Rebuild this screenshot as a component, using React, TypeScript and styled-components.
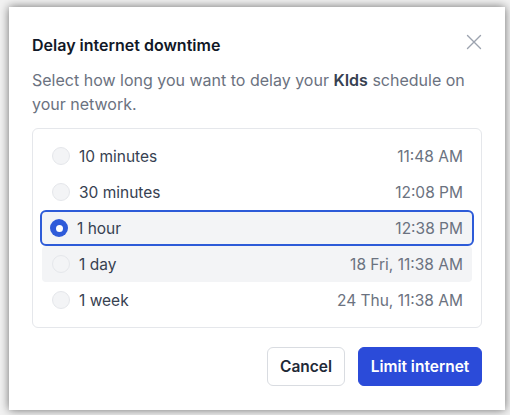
import React, { useState } from "react";
import styled, { createGlobalStyle } from "styled-components";

const Global = createGlobalStyle`
  html, body { margin: 0; padding: 0; }
  body {
    background: #f2f2f2;
    font-family: Inter, "Noto Sans", sans-serif;
    -webkit-font-smoothing: antialiased;
  }
`;

const Page = styled.div`
  width: 510px;
  height: 415px;
  padding: 7px 5px 5px 9px;
  box-sizing: border-box;
`;

const Card = styled.div`
  position: relative;
  width: 496px;
  height: 403px;
  background: #ffffff;
  box-shadow: 0 0 9px rgba(0, 0, 0, 0.55);
  box-sizing: border-box;
  padding: 26px 23px 0 23px;
  display: flex;
  flex-direction: column;
`;

const Header = styled.div`
  display: flex;
  justify-content: space-between;
  align-items: flex-start;
`;

const Title = styled.h2`
  margin: 0;
  font-size: 16px;
  line-height: 24px;
  font-weight: 600;
  color: #111827;
`;

const CloseBtn = styled.button`
  border: none;
  background: none;
  padding: 0;
  margin: 0 -1px 0 0;
  width: 18px;
  height: 18px;
  display: flex;
  align-items: center;
  justify-content: center;
  cursor: pointer;
  color: #9ca3af;
`;

const Desc = styled.p`
  margin: 11px 0 0 0;
  font-size: 16px;
  line-height: 24px;
  color: #6b7280;
  b { font-weight: 600; color: #374151; }
`;

const List = styled.div`
  margin-top: 12px;
  border: 1px solid #e5e7eb;
  border-radius: 6px;
  padding: 9px 8px;
  display: flex;
  flex-direction: column;
`;

const Row = styled.label<{ $selected?: boolean; $hover?: boolean }>`
  display: flex;
  align-items: center;
  height: 36px;
  box-sizing: border-box;
  padding: 0 9px 0 ${(p) => (p.$selected ? "8px" : "10px")};
  border-radius: ${(p) => (p.$selected ? "6px" : "4px")};
  border: ${(p) => (p.$selected ? "2px solid #2d5bd8" : "none")};
  margin: ${(p) => (p.$selected ? "0 -1px" : "0 1px")};
  background: ${(p) => (p.$selected || p.$hover ? "#f3f4f6" : "transparent")};
  cursor: pointer;
`;

const Radio = styled.span<{ $checked?: boolean }>`
  width: 18px;
  height: 18px;
  border-radius: 50%;
  box-sizing: border-box;
  flex-shrink: 0;
  background: ${(p) => (p.$checked ? "#2f5bd9" : "#f3f4f6")};
  border: ${(p) => (p.$checked ? "none" : "1.5px solid #e5e7eb")};
  display: flex;
  align-items: center;
  justify-content: center;
  &::after {
    content: "";
    display: ${(p) => (p.$checked ? "block" : "none")};
    width: 7px;
    height: 7px;
    border-radius: 50%;
    background: #ffffff;
  }
`;

const Label = styled.span`
  margin-left: 9px;
  font-size: 15.5px;
  color: #374151;
  flex: 1;
`;

const Time = styled.span`
  font-size: 15.5px;
  color: #6b7280;
`;

const Footer = styled.div`
  margin-top: 19px;
  display: flex;
  justify-content: flex-end;
  gap: 13px;
`;

const Button = styled.button<{ $primary?: boolean }>`
  height: 39px;
  box-sizing: border-box;
  padding: 0 10px;
  border-radius: 6px;
  font-family: inherit;
  font-size: 15.5px;
  font-weight: 600;
  cursor: pointer;
  border: ${(p) => (p.$primary ? "1px solid #2b4bd9" : "1px solid #d9dce1")};
  background: ${(p) => (p.$primary ? "#2b4bd9" : "#ffffff")};
  color: ${(p) => (p.$primary ? "#ffffff" : "#1f2937")};
  min-width: ${(p) => (p.$primary ? "124px" : "78px")};
`;

const options = [
  { label: "10 minutes", time: "11:48 AM" },
  { label: "30 minutes", time: "12:08 PM" },
  { label: "1 hour", time: "12:38 PM" },
  { label: "1 day", time: "18 Fri, 11:38 AM" },
  { label: "1 week", time: "24 Thu, 11:38 AM" },
];

export default function App() {
  const [selected, setSelected] = useState(2);
  return (
    <>
      <Global />
      <Page>
        <Card>
          <Header>
            <Title>Delay internet downtime</Title>
            <CloseBtn aria-label="Close">
              <svg width="16" height="16" viewBox="0 0 16 16" fill="none">
                <path d="M1.5 1.5L14.5 14.5M14.5 1.5L1.5 14.5" stroke="#9ca3af" strokeWidth="1.4" strokeLinecap="round" />
              </svg>
            </CloseBtn>
          </Header>
          <Desc>
            Select how long you want to delay your <b>KIds</b> schedule on your network.
          </Desc>
          <List>
            {options.map((o, i) => (
              <Row key={o.label} $selected={i === selected} $hover={i === 3} onClick={() => setSelected(i)}>
                <Radio $checked={i === selected} />
                <Label>{o.label}</Label>
                <Time>{o.time}</Time>
              </Row>
            ))}
          </List>
          <Footer>
            <Button>Cancel</Button>
            <Button $primary>Limit internet</Button>
          </Footer>
        </Card>
      </Page>
    </>
  );
}
